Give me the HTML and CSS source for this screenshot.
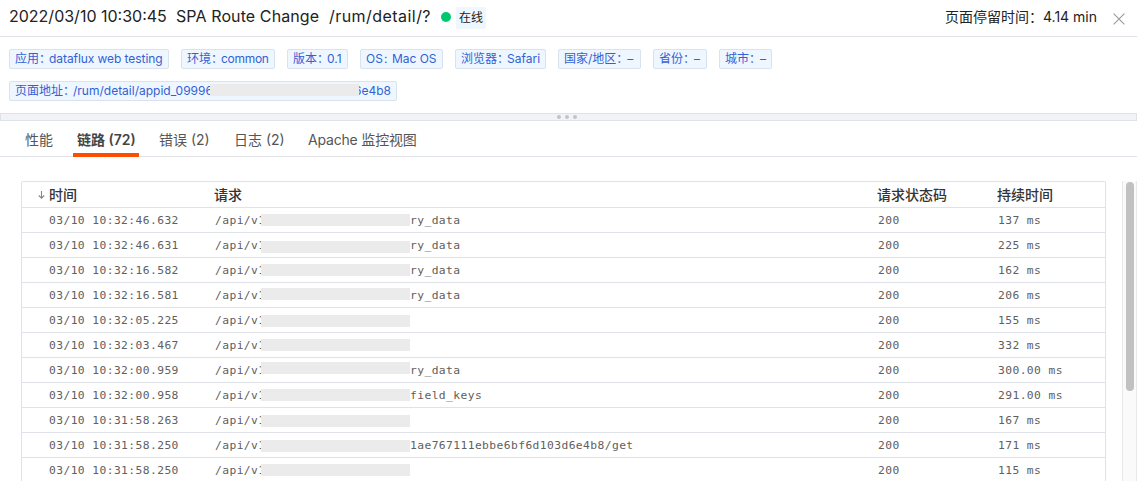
FILE: index.html
```html
<!DOCTYPE html>
<html lang="zh-CN">
<head>
<meta charset="utf-8">
<title>SPA Route Change</title>
<link rel="stylesheet" href="styles.css">
</head>
<body>
<header class="header">
  <div class="title"><span class="date">2022/03/10 10:30:45</span><span class="event">SPA Route Change</span><span class="route">/rum/detail/?</span></div>
  <i class="dot"></i><span class="online">在线</span>
  <div class="stay">页面停留时间<span class="stay-colon">：</span><span>4.14 min</span></div>
  <svg class="close" width="12" height="12" viewBox="0 0 12 12"><path d="M.6.6 11.4 11.4M11.4.6.6 11.4" fill="none" stroke="#999" stroke-width="1.1"/></svg>
</header>
<section class="tags">
  <span class="tag w-app">应用<b>：</b><span class="val app-name">dataflux web testing</span></span>
  <span class="tag w-env">环境<b>：</b><span class="val env-name">common</span></span>
  <span class="tag w-ver">版本<b>：</b><span class="val">0.1</span></span>
  <span class="tag w-os">OS<b class="narrow">:</b><span class="val">Mac OS</span></span>
  <span class="tag w-browser">浏览器<b>：</b><span class="val">Safari</span></span>
  <span class="tag w-country">国家/地区<b>：</b><span class="val dash">–</span></span>
  <span class="tag w-prov">省份<b>：</b><span class="val dash">–</span></span>
  <span class="tag w-city">城市<b>：</b><span class="val dash">–</span></span>
  <span class="tag w-url">页面地址<b>：</b><span class="url-head">/rum/detail/appid_09996</span><span class="url-tail">6e4b8</span><i class="url-mask"></i></span>
</section>
<div class="splitter"><i></i><i></i><i></i></div>
<nav class="tabs">
  <a class="tab t1">性能</a><a class="tab t2 active">链路 (72)</a><a class="tab t3">错误 (2)</a><a class="tab t4">日志 (2)</a><a class="tab t5">Apache 监控视图</a>
</nav>
<main class="content">
  <div class="table">
    <div class="row head"><span class="time"><svg class="sort" width="7" height="8" viewBox="0 0 7 8"><path d="M3.5 0V7M.8 4.5 3.5 7.2 6.2 4.5" fill="none" stroke="#888" stroke-width="1.1"/></svg>时间</span><span>请求</span><span>请求状态码</span><span>持续时间</span></div>
    <div class="row"><span class="time">03/10 10:32:46.632</span><span class="req"><span class="prefix">/api/v1</span>ry_data<i class="mask m6"></i></span><span>200</span><span>137 ms</span></div>
    <div class="row"><span class="time">03/10 10:32:46.631</span><span class="req"><span class="prefix">/api/v1</span>ry_data<i class="mask m8"></i></span><span>200</span><span>225 ms</span></div>
    <div class="row"><span class="time">03/10 10:32:16.582</span><span class="req"><span class="prefix">/api/v1</span>ry_data<i class="mask m6"></i></span><span>200</span><span>162 ms</span></div>
    <div class="row"><span class="time">03/10 10:32:16.581</span><span class="req"><span class="prefix">/api/v1</span>ry_data<i class="mask m5"></i></span><span>200</span><span>206 ms</span></div>
    <div class="row"><span class="time">03/10 10:32:05.225</span><span class="req"><span class="prefix">/api/v1</span><i class="mask m7"></i></span><span>200</span><span>155 ms</span></div>
    <div class="row"><span class="time">03/10 10:32:03.467</span><span class="req"><span class="prefix">/api/v1</span><i class="mask m6"></i></span><span>200</span><span>332 ms</span></div>
    <div class="row"><span class="time">03/10 10:32:00.959</span><span class="req"><span class="prefix">/api/v1</span>ry_data<i class="mask m4"></i></span><span>200</span><span>300.00 ms</span></div>
    <div class="row"><span class="time">03/10 10:32:00.958</span><span class="req"><span class="prefix">/api/v1</span>field_keys<i class="mask m6"></i></span><span>200</span><span>291.00 ms</span></div>
    <div class="row"><span class="time">03/10 10:31:58.263</span><span class="req"><span class="prefix">/api/v1</span><i class="mask m7"></i></span><span>200</span><span>167 ms</span></div>
    <div class="row"><span class="time">03/10 10:31:58.250</span><span class="req"><span class="prefix">/api/v1</span>1ae767111ebbe6bf6d103d6e4b8/get<i class="mask m7"></i></span><span>200</span><span>171 ms</span></div>
    <div class="row"><span class="time">03/10 10:31:58.250</span><span class="req"><span class="prefix">/api/v1</span><i class="mask m6"></i></span><span>200</span><span>115 ms</span></div>
  </div>
  <div class="scroll"><div class="thumb"></div></div>
</main>
</body>
</html>
```
FILE: styles.css
```css
* { box-sizing: border-box; }
html, body { height: 100%; }
body {
  margin: 0;
  overflow: hidden;
  display: flex;
  flex-direction: column;
  background: #fff;
  color: #222;
  font-family: Inter, "Noto Sans CJK SC", sans-serif;
  white-space: nowrap;
}
.header {
  flex: none;
  height: 37px;
  border-bottom: 1px solid #dfe3e9;
  display: flex;
  align-items: center;
  padding: 0 12px 2px 9px;
}
.title { display: flex; font-size: 16px; line-height: 20px; padding-bottom: 2px; }
.date { width: 167px; }
.event { width: 153px; letter-spacing: 0.1px; }
.route { width: 112px; letter-spacing: 0.45px; }
.dot { width: 10px; height: 10px; border-radius: 50%; background: #00c86e; }
.online {
  margin: 1px 0 0 5px;
  width: 30px;
  height: 22px;
  border-radius: 2px;
  background: #eef7ff;
  font-size: 12px;
  line-height: 22px;
  text-align: center;
}
.stay { margin-left: auto; font-size: 14px; line-height: 20px; }
.stay-colon { display: inline-block; width: 14px; }
.close { margin: 3px 0 0 16px; }

.tags {
  flex: none;
  height: 76px;
  padding: 12px 9px 0;
  display: flex;
  flex-wrap: wrap;
  align-content: flex-start;
  gap: 12px;
}
.tag {
  position: relative;
  height: 20px;
  padding: 0 5px;
  border: 1px solid #d9e2ef;
  border-radius: 2px;
  background: #eef7ff;
  color: #3460d4;
  font-size: 12px;
  line-height: 18px;
  display: flex;
}
.tag b { width: 10px; font-weight: 400; }
.tag .narrow { width: 9px; padding-left: 1px; }
.app-name { letter-spacing: -0.07px; }
.env-name { letter-spacing: -0.3px; }
.dash { padding-left: 1px; }
.w-app { width: 160px; }
.w-env { width: 94px; }
.w-ver { width: 61px; }
.w-os { width: 83px; }
.w-browser { width: 91px; }
.w-country { width: 83px; }
.w-prov { width: 54px; }
.w-city { width: 53px; }
.w-url { width: 388px; }
.url-head { width: 284px; }
.url-mask {
  position: absolute;
  left: 200px;
  top: 2px;
  width: 149px;
  height: 12px;
  background: #ebebeb;
}

.splitter {
  flex: none;
  height: 8px;
  border: 1px solid #dfe3e7;
  background: #f1f3f6;
  display: flex;
  justify-content: center;
  align-items: center;
  gap: 4px;
  padding-right: 3px;
}
.splitter i { width: 4px; height: 4px; border-radius: 50%; background: #c4c4c6; }

.tabs {
  flex: none;
  height: 36px;
  border-bottom: 1px solid #e2e4e9;
  display: flex;
  padding-left: 21px;
  font-size: 14px;
  line-height: 38px;
  color: #555;
}
.tab { height: 36px; padding-left: 4px; }
.t1 { width: 52px; }
.t2 { width: 66px; margin-right: 16px; }
.t3 { width: 75px; }
.t4 { width: 74px; }
.t5 { letter-spacing: -0.18px; }
.active { border-bottom: 4px solid #ff4d00; font-weight: 600; color: #444; }

.content { flex: 1; min-height: 0; display: flex; padding: 24px 0 0 21px; }
.table { width: 1085px; border: 1px solid #dfe2e8; border-bottom: 0; border-radius: 2px 2px 0 0; }
.row {
  display: grid;
  grid-template-columns: 193px 663px 120px 107px;
  height: 25px;
  border-bottom: 1px solid #dfe2e8;
  color: #606060;
  font-family: "DejaVu Sans Mono", monospace;
  font-size: 11.3px;
  letter-spacing: 0.41px;
  line-height: 26px;
}
.row .time { padding-left: 27px; }
.head {
  height: 26px;
  font-family: Inter, "Noto Sans CJK SC", sans-serif;
  font-size: 14px;
  letter-spacing: 0;
  line-height: 26px;
  font-weight: 500;
  color: #333;
  grid-template-columns: 192px 663px 120px 107px;
}
.sort { position: absolute; left: 16px; top: 9px; }
.head .time { position: relative; }
.req { position: relative; display: flex; }
.prefix { width: 195px; }
.mask { position: absolute; left: 46px; width: 149px; height: 12px; background: #ebebeb; }
.m4 { top: 4px; }
.m5 { top: 5px; }
.m6 { top: 6px; }
.m7 { top: 7px; }
.m8 { top: 8px; }
.scroll {
  margin-left: 16px;
  width: 15px;
  border: solid #e8e8e8;
  border-width: 0 1px;
  background: #fafafa;
  padding: 1px 0 0 3px;
}
.thumb { width: 8px; height: 209px; border-radius: 4px; background: #c1c1c1; }
```
